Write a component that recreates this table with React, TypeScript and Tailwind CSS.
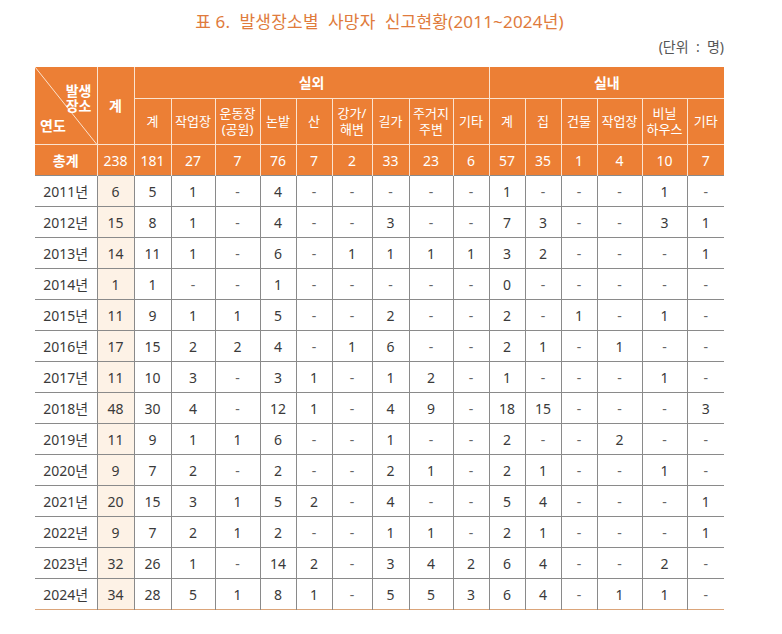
const outdoor = ["계", "작업장", "운동장\n(공원)", "논밭", "산", "강가/\n해변", "길가", "주거지\n주변", "기타"];
const indoor = ["계", "집", "건물", "작업장", "비닐\n하우스", "기타"];

const colWidths = [62, 37, 37, 44, 45, 36, 36, 40, 37, 44, 36, 36, 36, 36, 45, 45, 37];

const totals = ["238", "181", "27", "7", "76", "7", "2", "33", "23", "6", "57", "35", "1", "4", "10", "7"];

const rows: [string, string][] = [
  ["2011년", "6 5 1 - 4 - - - - - 1 - - - 1 -"],
  ["2012년", "15 8 1 - 4 - - 3 - - 7 3 - - 3 1"],
  ["2013년", "14 11 1 - 6 - 1 1 1 1 3 2 - - - 1"],
  ["2014년", "1 1 - - 1 - - - - - 0 - - - - -"],
  ["2015년", "11 9 1 1 5 - - 2 - - 2 - 1 - 1 -"],
  ["2016년", "17 15 2 2 4 - 1 6 - - 2 1 - 1 - -"],
  ["2017년", "11 10 3 - 3 1 - 1 2 - 1 - - - 1 -"],
  ["2018년", "48 30 4 - 12 1 - 4 9 - 18 15 - - - 3"],
  ["2019년", "11 9 1 1 6 - - 1 - - 2 - - 2 - -"],
  ["2020년", "9 7 2 - 2 - - 2 1 - 2 1 - - 1 -"],
  ["2021년", "20 15 3 1 5 2 - 4 - - 5 4 - - - 1"],
  ["2022년", "9 7 2 1 2 - - 1 1 - 2 1 - - - 1"],
  ["2023년", "32 26 1 - 14 2 - 3 4 2 6 4 - - 2 -"],
  ["2024년", "34 28 5 1 8 1 - 5 5 3 6 4 - 1 1 -"],
];

const font = { fontFamily: '"Noto Sans", "Noto Sans CJK KR", sans-serif' };

function HeadLabel({ text }: { text: string }) {
  return (
    <>
      {text.split("\n").map((line) => (
        <div key={line}>{line}</div>
      ))}
    </>
  );
}

export default function App() {
  return (
    <div className="min-h-[634px] bg-white pt-[10px]" style={font}>
      <div className="ml-[35px] w-[689px]">
        <h1 className="whitespace-pre text-center text-[17px] font-normal leading-[24px] tracking-[0.2px] text-[#e07b3c]">
          표 6.  발생장소별  사망자  신고현황(2011~2024년)
        </h1>
        <div className="mt-[4px] whitespace-pre text-right text-[14px] leading-[18px] text-[#555]">
          (단위  :  명)
        </div>

        <table className="mt-[11px] w-[689px] table-fixed border-collapse text-center text-[14px] text-[#3a3a3a]">
          <colgroup>
            {colWidths.map((w, i) => (
              <col key={i} style={{ width: w }} />
            ))}
          </colgroup>
          <thead className="bg-[#ec7f35] text-white">
            <tr className="h-[31px]">
              <th rowSpan={2} className="relative border-b border-r border-[#fbe3cf] p-0 font-semibold">
                <svg className="absolute inset-0 h-full w-full" preserveAspectRatio="none" viewBox="0 0 62 77">
                  <line x1="0" y1="0" x2="62" y2="77" stroke="#fbe3cf" strokeWidth="1" />
                </svg>
                <div className="relative flex h-[77px] flex-col px-[5px] pt-[16px] text-[14px] leading-[15px]">
                  <div className="text-right">발생</div>
                  <div className="text-right">장소</div>
                  <div className="mt-[5px] text-left">연도</div>
                </div>
              </th>
              <th rowSpan={2} className="border-b border-r border-[#fbe3cf] p-0 font-semibold">
                계
              </th>
              <th colSpan={9} className="border-b border-r border-[#fbe3cf] p-0 font-semibold">
                실외
              </th>
              <th colSpan={6} className="border-b border-[#fbe3cf] p-0 font-semibold">
                실내
              </th>
            </tr>
            <tr className="h-[46px]">
              {[...outdoor, ...indoor].map((label, i) => (
                <th
                  key={i}
                  className={`border-b border-[#fbe3cf] p-0 text-[13px] font-normal leading-[16px] ${i < 14 ? "border-r" : ""}`}
                >
                  <HeadLabel text={label} />
                </th>
              ))}
            </tr>
            <tr className="h-[31px]">
              <th className="border-r border-[#fbe3cf] p-0 font-semibold">총계</th>
              {totals.map((v, i) => (
                <td key={i} className={`border-[#fbe3cf] p-0 text-[14px] ${i < 15 ? "border-r" : ""}`}>
                  {v}
                </td>
              ))}
            </tr>
          </thead>
          <tbody>
            {rows.map(([year, data], r) => {
              const cells = data.split(" ");
              const last = r === rows.length - 1;
              return (
                <tr
                  key={year}
                  className={`h-[31px] border-t border-[#8a8a8a] ${last ? "border-b border-b-[#dba57a]" : ""}`}
                >
                  <td className="border-r border-[#8a8a8a] p-0">{year}</td>
                  {cells.map((c, i) => (
                    <td
                      key={i}
                      className={`border-[#8a8a8a] p-0 ${i < 15 ? "border-r" : ""} ${i === 0 ? "bg-[#fdf2e6]" : ""} ${c === "-" ? "text-[#666]" : ""}`}
                    >
                      {c}
                    </td>
                  ))}
                </tr>
              );
            })}
          </tbody>
        </table>
      </div>
    </div>
  );
}
